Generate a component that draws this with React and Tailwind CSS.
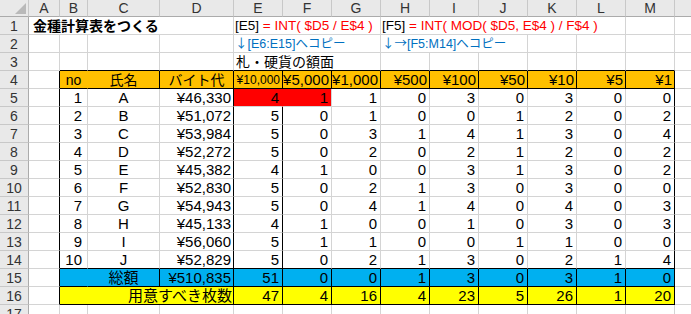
import React from 'react';

// 罫線の色（クラス名は省略せずに書く）
const RB = {
  g: 'border-r-[#d4d4d4]',
  k: 'border-r-black',
  o: 'border-r-[#ffc000]',
  b: 'border-r-[#00b0f0]',
  r: 'border-r-[#ff0000]',
};
const BB = {
  g: 'border-b-[#d4d4d4]',
  k: 'border-b-black',
};

const SPAN = { 1: '', 2: 'col-span-2', 3: 'col-span-3', 4: 'col-span-4', 5: 'col-span-5' };

const LETTERS = ['A', 'B', 'C', 'D', 'E', 'F', 'G', 'H', 'I', 'J', 'K', 'L', 'M', 'N'];

const faces = ['¥10,000', '¥5,000', '¥1,000', '¥500', '¥100', '¥50', '¥10', '¥5', '¥1'];

const people = [
  ['A', '¥46,330', [4, 1, 1, 0, 3, 0, 3, 0, 0]],
  ['B', '¥51,072', [5, 0, 1, 0, 0, 1, 2, 0, 2]],
  ['C', '¥53,984', [5, 0, 3, 1, 4, 1, 3, 0, 4]],
  ['D', '¥52,272', [5, 0, 2, 0, 2, 1, 2, 0, 2]],
  ['E', '¥45,382', [4, 1, 0, 0, 3, 1, 3, 0, 2]],
  ['F', '¥52,830', [5, 0, 2, 1, 3, 0, 3, 0, 0]],
  ['G', '¥54,943', [5, 0, 4, 1, 4, 0, 4, 0, 3]],
  ['H', '¥45,133', [4, 1, 0, 0, 1, 0, 3, 0, 3]],
  ['I', '¥56,060', [5, 1, 1, 0, 0, 1, 1, 0, 0]],
  ['J', '¥52,829', [5, 0, 2, 1, 3, 0, 2, 1, 4]],
];

const totals = [51, 0, 0, 1, 3, 0, 3, 1, 0];
const needs = [47, 4, 16, 4, 23, 5, 26, 1, 20];

const plain = (span = 1, text = null, cls = '') => ({
  span,
  text,
  cls: `${RB.g} ${BB.g} ${cls}`,
});

const cjk = "font-['Noto_Sans_CJK_JP',sans-serif]";

function buildRows() {
  const rows = [];

  // 1行目
  rows.push([
    plain(4, '金種計算表をつくる', 'justify-start pl-[4px] font-bold text-[14px]'),
    plain(
      3,
      <span className="whitespace-pre">
        {'[E5] '}
        <span className="text-[#ff0000]">= INT( $D5 / E$4 )</span>
      </span>,
      'justify-start pl-[1px] text-[13.5px]'
    ),
    plain(
      5,
      <span className="whitespace-pre">
        {'[F5] '}
        <span className="text-[#ff0000]">= INT( MOD( $D5, E$4 ) / F$4 )</span>
      </span>,
      'justify-start pl-[1px] text-[13.5px]'
    ),
    plain(),
    plain(),
  ]);

  // 2行目
  rows.push([
    plain(),
    plain(),
    plain(),
    plain(),
    plain(
      3,
      <span>
        <span className={cjk}>↓</span>[E6:E15]へコピー
      </span>,
      'justify-start pl-[1px] text-[12.5px] text-[#0070c0]'
    ),
    plain(
      3,
      <span>
        <span className={cjk}>↓→</span>[F5:M14]へコピー
      </span>,
      'justify-start pl-[1px] text-[12.5px] text-[#0070c0]'
    ),
    plain(),
    plain(),
    plain(),
    plain(),
  ]);

  // 3行目
  const r3 = [{ span: 1, text: null, cls: `${RB.g} ${BB.g}` }];
  for (let i = 0; i < 3; i++) r3.push({ span: 1, text: null, cls: `${RB.g} ${BB.k}` });
  r3.push({ span: 3, text: '札・硬貨の額面', cls: `${RB.g} ${BB.k} justify-start pl-[2px] text-[14px]` });
  for (let i = 0; i < 6; i++) r3.push({ span: 1, text: null, cls: `${RB.g} ${BB.k}` });
  r3.push(plain());
  rows.push(r3);

  // 4行目（見出し）
  const hd = 'bg-[#ffc000]';
  const r4 = [
    { span: 1, text: null, cls: `${RB.k} ${BB.g}` },
    { span: 1, text: 'no', cls: `${hd} ${RB.o} ${BB.k} justify-center text-[14px]` },
    { span: 1, text: '氏名', cls: `${hd} ${RB.k} ${BB.k} justify-center text-[14px]` },
    { span: 1, text: 'バイト代', cls: `${hd} ${RB.k} ${BB.k} justify-center text-[14px]` },
  ];
  faces.forEach((f, i) =>
    r4.push({
      span: 1,
      text: f,
      cls: `${hd} ${RB.k} ${BB.k} justify-end pr-[2px] ${i === 0 ? 'text-[12px]' : 'text-[15px]'}`,
    })
  );
  r4.push(plain());
  rows.push(r4);

  // 5〜14行目
  people.forEach(([name, pay, vals], i) => {
    const last = i === people.length - 1;
    const bb = last ? BB.k : BB.g;
    const first = i === 0;
    const row = [
      { span: 1, text: null, cls: `${RB.k} ${BB.g}` },
      { span: 1, text: i + 1, cls: `${RB.g} ${bb} justify-end pr-[5px] text-[15px]` },
      { span: 1, text: name, cls: `${RB.g} ${bb} justify-center text-[15px]` },
      { span: 1, text: pay, cls: `${RB.k} ${bb} justify-end pr-[2px] text-[15px]` },
    ];
    vals.forEach((v, j) => {
      let rb = RB.g;
      if (j === 0) rb = first ? RB.r : RB.k;
      if (j === 8) rb = RB.k;
      const red = first && j < 2 ? 'bg-[#ff0000]' : '';
      row.push({ span: 1, text: v, cls: `${rb} ${bb} ${red} justify-end pr-[3px] text-[15px]` });
    });
    row.push(plain());
    rows.push(row);
  });

  // 15行目（総額）
  const bl = 'bg-[#00b0f0]';
  const r15 = [
    { span: 1, text: null, cls: `${RB.k} ${BB.g}` },
    { span: 1, text: null, cls: `${bl} ${RB.b} ${BB.k}` },
    { span: 1, text: '総額', cls: `${bl} ${RB.k} ${BB.k} justify-center text-[15px]` },
    { span: 1, text: '¥510,835', cls: `${bl} ${RB.k} ${BB.k} justify-end pr-[2px] text-[15px]` },
  ];
  totals.forEach((v) =>
    r15.push({ span: 1, text: v, cls: `${bl} ${RB.k} ${BB.k} justify-end pr-[3px] text-[15px]` })
  );
  r15.push(plain());
  rows.push(r15);

  // 16行目（用意すべき枚数）
  const ye = 'bg-[#ffff00]';
  const r16 = [
    { span: 1, text: null, cls: `${RB.k} ${BB.g}` },
    { span: 3, text: '用意すべき枚数', cls: `${ye} ${RB.k} ${BB.k} justify-end pr-[1px] text-[15px]` },
  ];
  needs.forEach((v) =>
    r16.push({ span: 1, text: v, cls: `${ye} ${RB.k} ${BB.k} justify-end pr-[3px] text-[15px]` })
  );
  r16.push(plain());
  rows.push(r16);

  // 17行目
  rows.push(Array.from({ length: 14 }, () => plain()));

  return rows;
}

function App() {
  const rows = buildRows();

  return (
    <div className="w-[691px] h-[314px] overflow-hidden bg-white text-black font-['Liberation_Sans','Noto_Sans_CJK_JP',sans-serif]">
      <div className="grid grid-cols-[29px_31px_28px_72px_74px_repeat(9,49px)_60px] grid-rows-[17px_repeat(17,18px)]">
        {/* 列見出し */}
        <div className="relative bg-[#e9e9e9] border-r border-b border-r-[#c8c8c8] border-b-[#ababab]">
          <div className="absolute right-[2px] bottom-[2px] w-0 h-0 border-l-[11px] border-l-transparent border-b-[11px] border-b-[#b9b9b9]" />
        </div>
        {LETTERS.map((l) => (
          <div
            key={l}
            className="flex items-center justify-center bg-[#e9e9e9] border-r border-b border-r-[#c8c8c8] border-b-[#ababab] text-[14px] leading-none text-[#333]"
          >
            {l}
          </div>
        ))}

        {rows.map((row, ri) => (
          <React.Fragment key={ri}>
            <div className="flex items-center justify-center bg-[#e9e9e9] border-r border-b border-r-[#ababab] border-b-[#c8c8c8] text-[14px] leading-none text-[#333]">
              {ri + 1}
            </div>
            {row.map((cell, ci) => (
              <div
                key={ci}
                className={`flex items-center whitespace-nowrap leading-none border-r border-b ${SPAN[cell.span]} ${cell.cls}`}
              >
                {cell.text}
              </div>
            ))}
          </React.Fragment>
        ))}
      </div>
    </div>
  );
}

export default App;
